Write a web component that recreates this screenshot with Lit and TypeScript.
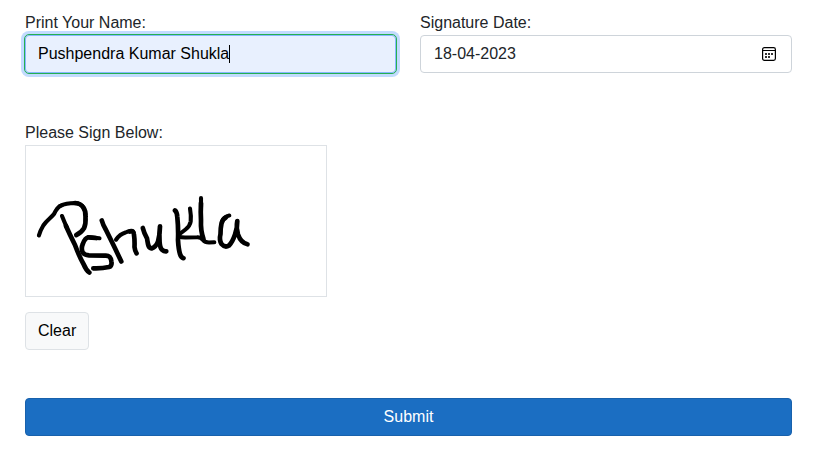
import { LitElement, html, css } from "lit";
import { customElement } from "lit/decorators.js";

@customElement("app-root")
export class AppRoot extends LitElement {
  static styles = css`
    :host {
      display: block;
      box-sizing: border-box;
      height: 473px;
      padding: 10px 44px 0 25px;
      background: #fff;
      color: #212529;
      font: 16px/24px "Liberation Sans", Arial, sans-serif;
    }
    * { box-sizing: border-box; }
    .row { display: grid; grid-template-columns: 371px 1fr; gap: 24px; }
    .label { height: 25px; padding-top: 1px; }
    .field {
      display: flex;
      align-items: center;
      justify-content: space-between;
      height: 38px;
      padding: 0 15px 0 13px;
      border: 1px solid #ced4da;
      border-radius: 4px;
    }
    .active {
      padding-left: 12px;
      border-color: #86b7fe;
      background: #e8f0fe;
      color: #000;
      outline: 1px solid #26b050;
      outline-offset: 0;
      box-shadow: 0 0 0 4px #c2dbfe;
      justify-content: flex-start;
    }
    .caret { width: 1px; height: 18px; background: #000; }
    .sign { margin-top: 47px; }
    .pad {
      display: block;
      width: 302px;
      height: 152px;
      border: 1px solid #dee2e6;
    }
    .ink { fill: none; stroke: #000; stroke-width: 4.7; stroke-linecap: round; stroke-linejoin: round; }
    .thin { stroke-width: 4.1; }
    .btn {
      display: block;
      height: 38px;
      padding: 0 12px;
      border: 1px solid #dee2e6;
      border-radius: 4px;
      background: #f8f9fa;
      color: #000;
      font: inherit;
    }
    .clear { width: 64px; margin-top: 15px; }
    .submit { width: 100%; margin-top: 48px; background: #1b6ec2; border-color: #1861ac; color: #fff; }
  `;

  render() {
    return html`
      <div class="row">
        <div>
          <div class="label">Print Your Name:</div>
          <div class="field active"><span>Pushpendra Kumar Shukla</span><span class="caret"></span></div>
        </div>
        <div>
          <div class="label">Signature Date:</div>
          <div class="field">
            <span>18-04-2023</span>
            <svg width="14" height="14" viewBox="0 0 14 14">
              <rect x=".6" y=".6" width="12.8" height="12.8" rx="1.8" fill="none" stroke="#000" stroke-width="1.2" />
              <path d="M1 3.5H13" stroke="#000" />
              <path d="M6 6h2v2H6zM9 6h2v2H9zM3 6h2v2H3zM3 9h2v2H3zM6 9h2v2H6z" fill="#333" />
            </svg>
          </div>
        </div>
      </div>
      <div class="sign">
        <div class="label">Please Sign Below:</div>
        <svg class="pad" viewBox="26 146 300 150">
          <g class="ink">
            <path class="thin" d="M38.900 235.500Q40 231 43.300 225.500C47 220 51 218 54 214C56 210 58 206 62 205.300" />
            <path class="thin" d="M60 206Q66 203 75 203Q81 203.500 83.500 207.500" />
            <path d="M75 203Q81 203.500 83.300 207.500Q86 211 85.500 217Q86 224 84 228.300Q81 233 76.300 235" />
            <path class="thin" d="M62 216Q64 221 67 228" />
            <path d="M66 226Q70 235 75 245Q79 256 83.500 264Q86 270 89.300 272.500" />
            <path class="thin" d="M99.500 238.300L88.300 237.300" />
            <path d="M96 238Q92 237.300 88.300 237.300Q85 238 82.800 244Q81 248 82.500 252Q84 255 89 255.400L105 255.600Q111 255 111.500 262Q112 266 109 267Q102 268.600 93.300 268.300" />
            <path d="M101.800 220.500Q103 225 106 230Q111 240 115 248.300L121.300 261.500" />
            <path class="thin" d="M116 239.700Q120 234 125.500 232.500Q133 229 133.700 233" />
            <path d="M130 231.500Q133.500 230.500 133.900 234Q134.800 240 134.500 247Q135 251 136.500 253.300" />
            <path d="M142.800 228Q144 233 147 238.300C148 244 148 248 151.500 248.500Q156 247 158 241.500Q160 234 160 226.300Q159 233 159.600 242Q160 248 162 249.700Q164 251.500 166.300 251.300" />
            <path d="M175 210.500Q177 212 177.300 217Q178.500 229 178 240Q178.500 249 180 254Q181 257.500 183.500 258.200" />
            <path class="thin" d="M190 208.500Q191.300 216 190.700 221.500Q190 226 185.500 229.500L179 234.500" />
            <path class="thin" d="M179 236.500Q181 237.600 186 237.500L197 237.200Q201 237 203 240Q205 242.500 209 242.500L214.300 242.300" />
            <path class="thin" d="M201 198V207" />
            <path d="M201 203Q200.500 212 201 220Q200.500 231 203.500 239" />
            <path class="thin" d="M229.300 215.600Q224 216.500 221.800 222" />
            <path d="M226 217.300Q222.500 219 221.500 223.500Q220.500 228 220.500 234Q219 240 221.500 244Q225 248 229 245.500Q232.500 242 235 234.500Q237.500 228 237.300 221Q236 228 238 234.500Q241 243 247.500 244.300" />
          </g>
        </svg>
      </div>
      <button class="btn clear">Clear</button>
      <button class="btn submit">Submit</button>
    `;
  }
}
